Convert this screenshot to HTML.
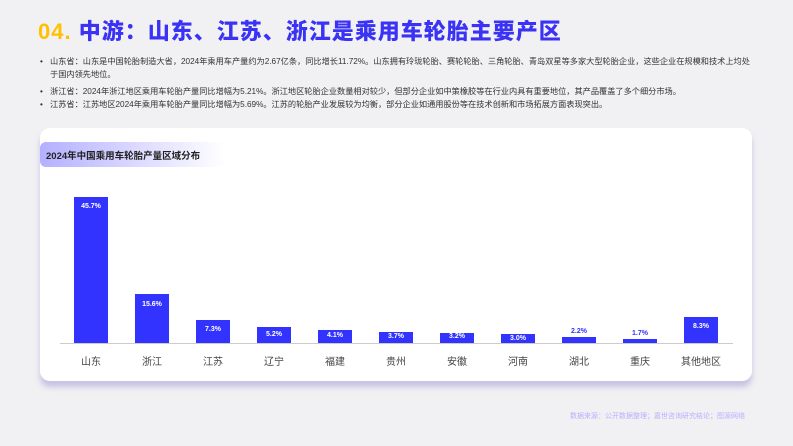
<!DOCTYPE html>
<html><head><meta charset="utf-8"><style>
*{margin:0;padding:0;box-sizing:border-box}
body{width:793px;height:446px;background:#f1f1f3;position:relative;overflow:hidden;font-family:"Liberation Sans","Noto Sans CJK SC",sans-serif}
.t{position:absolute;left:38px;top:14px;font-size:22px;font-weight:900;color:#3a33f5;letter-spacing:1px;white-space:nowrap}
.t span{color:#ffc000}
.b{position:absolute;left:50px;font-size:8.2px;color:#333;white-space:nowrap;line-height:13px}
.d::before{content:"•";position:absolute;left:-10px}
.card{position:absolute;left:40px;top:128px;width:712px;height:253px;background:#fff;border-radius:10px;box-shadow:0 6px 6px rgba(120,110,200,.35)}
.pill{position:absolute;left:40px;top:142px;width:185px;height:25px;border-radius:6px 0 0 6px;background:linear-gradient(90deg,#b4b0ff,#fff);font-size:9.5px;font-weight:bold;color:#222;padding:6px 0 0 6px;white-space:nowrap}
.bar{position:absolute;width:34px;background:#3333ff;color:#fff;font-size:7px;font-weight:bold;text-align:center}
.lab{position:absolute;width:60px;text-align:center;font-size:10px;color:#444;top:353px}
.o{position:absolute;width:34px;text-align:center;font-size:7px;font-weight:bold;color:#3333ff}
.axis{position:absolute;left:60px;top:343px;width:673px;height:1px;background:#ccc}
.f{position:absolute;left:570px;top:411px;font-size:7px;color:#b7b0ff;white-space:nowrap}
</style></head><body>
<div class="t"><span>04.</span> 中游：山东、江苏、浙江是乘用车轮胎主要产区</div>
<div class="b d" style="top:55px">山东省：山东是中国轮胎制造大省，2024年乘用车产量约为2.67亿条，同比增长11.72%。山东拥有玲珑轮胎、赛轮轮胎、三角轮胎、青岛双星等多家大型轮胎企业，这些企业在规模和技术上均处</div>
<div class="b" style="top:68px;">于国内领先地位。</div>
<div class="b d" style="top:85px">浙江省：2024年浙江地区乘用车轮胎产量同比增幅为5.21%。浙江地区轮胎企业数量相对较少，但部分企业如中策橡胶等在行业内具有重要地位，其产品覆盖了多个细分市场。</div>
<div class="b d" style="top:98px">江苏省：江苏地区2024年乘用车轮胎产量同比增幅为5.69%。江苏的轮胎产业发展较为均衡，部分企业如通用股份等在技术创新和市场拓展方面表现突出。</div>
<div class="card"></div>
<div class="pill">2024年中国乘用车轮胎产量区域分布</div>
<div class="axis"></div>
<div class="bar" style="left:74px;top:197px;height:146px;padding-top:6px">45.7%</div>
<div class="bar" style="left:135px;top:294px;height:49px;padding-top:7px">15.6%</div>
<div class="bar" style="left:196px;top:320px;height:23px;padding-top:6px">7.3%</div>
<div class="bar" style="left:257px;top:327px;height:16px;padding-top:4px">5.2%</div>
<div class="bar" style="left:318px;top:330px;height:13px;padding-top:2px">4.1%</div>
<div class="bar" style="left:379px;top:332px;height:11px;padding-top:1px">3.7%</div>
<div class="bar" style="left:440px;top:333px;height:10px;padding-top:0px">3.2%</div>
<div class="bar" style="left:501px;top:334px;height:9px;padding-top:1px">3.0%</div>
<div class="bar" style="left:562px;top:337px;height:6px"></div><div class="o" style="left:562px;top:328px">2.2%</div>
<div class="bar" style="left:623px;top:339px;height:4px"></div><div class="o" style="left:623px;top:330px">1.7%</div>
<div class="bar" style="left:684px;top:317px;height:26px;padding-top:6px">8.3%</div>
<div class="lab" style="left:61px">山东</div><div class="lab" style="left:122px">浙江</div><div class="lab" style="left:183px">江苏</div><div class="lab" style="left:244px">辽宁</div><div class="lab" style="left:305px">福建</div><div class="lab" style="left:366px">贵州</div><div class="lab" style="left:427px">安徽</div><div class="lab" style="left:488px">河南</div><div class="lab" style="left:549px">湖北</div><div class="lab" style="left:610px">重庆</div><div class="lab" style="left:671px">其他地区</div>
<div class="f">数据来源：公开数据整理；嘉世咨询研究结论；图源网络</div>
</body></html>
